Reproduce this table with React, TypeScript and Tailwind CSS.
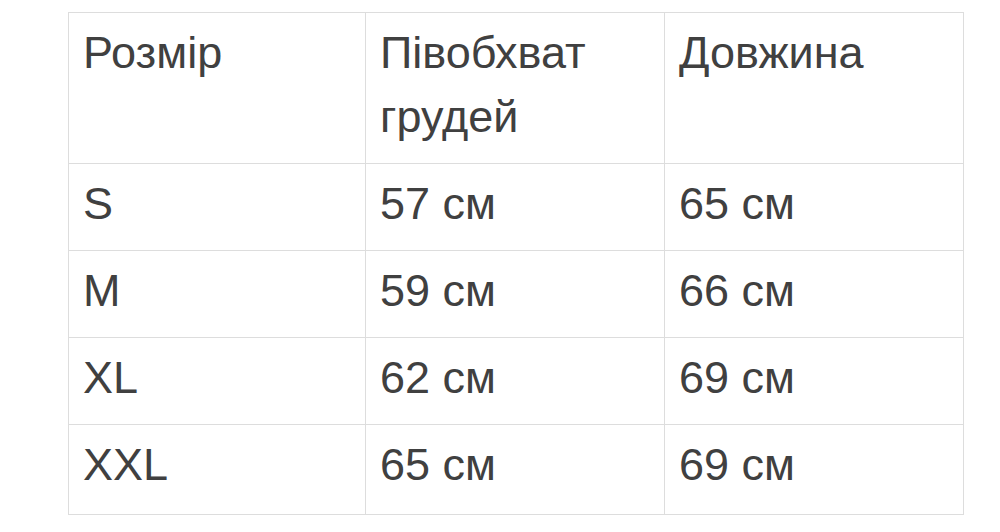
const rows = [
  ["S", "57 см", "65 см"],
  ["M", "59 см", "66 см"],
  ["XL", "62 см", "69 см"],
  ["XXL", "65 см", "69 см"],
];

const cell =
  "border border-[#dddddd] px-[14px] pt-2 pb-[14px] align-top text-left font-normal";

export default function App() {
  return (
    <div className="h-[532px] w-[1000px] bg-white pl-[68px] pt-[12px] font-['Liberation_Sans',Arial,sans-serif] text-[45px] leading-[64px] text-[#404040]">
      <table className="w-[895px] table-fixed border-collapse">
        <colgroup>
          <col className="w-[297px]" />
          <col className="w-[299px]" />
          <col className="w-[299px]" />
        </colgroup>
        <thead>
          <tr>
            <th className={cell}>Розмір</th>
            <th className={cell}>
              Півобхват
              <br />
              грудей
            </th>
            <th className={cell}>Довжина</th>
          </tr>
        </thead>
        <tbody>
          {rows.map((r, i) => (
            <tr key={r[0]}>
              {r.map((v, j) => (
                <td
                  key={j}
                  className={
                    i === rows.length - 1
                      ? "border border-[#dddddd] px-[14px] pt-2 pb-[17px] align-top"
                      : "border border-[#dddddd] px-[14px] pt-2 pb-[14px] align-top"
                  }
                >
                  {v}
                </td>
              ))}
            </tr>
          ))}
        </tbody>
      </table>
    </div>
  );
}
